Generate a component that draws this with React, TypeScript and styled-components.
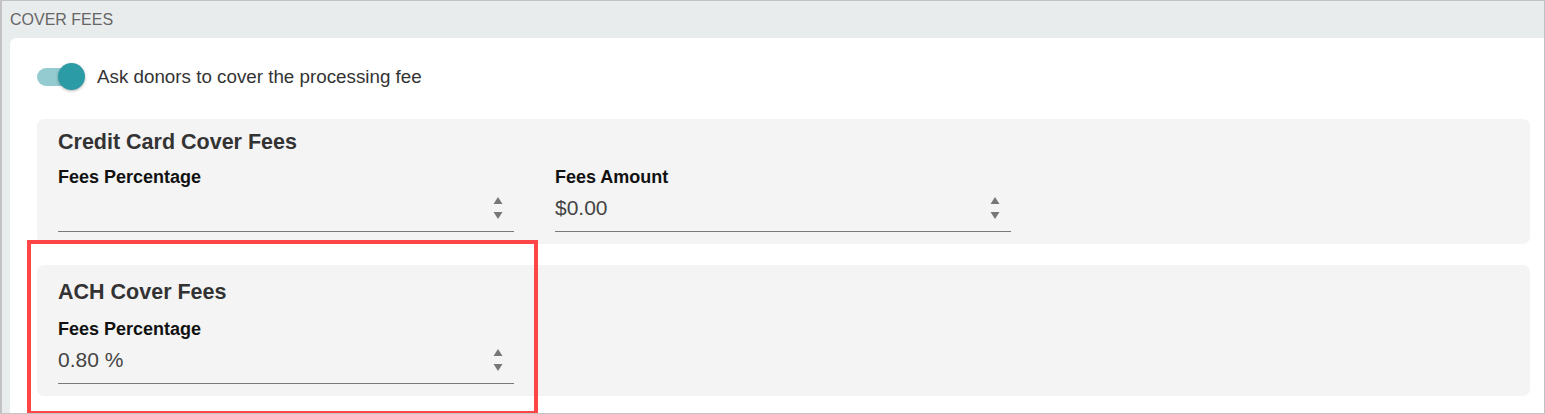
import styled, { createGlobalStyle } from 'styled-components';

const GlobalStyle = createGlobalStyle`
  html, body {
    margin: 0;
    padding: 0;
    background: #ffffff;
  }
  body {
    font-family: "Liberation Sans", Arial, sans-serif;
  }
`;

const Frame = styled.div`
  position: relative;
  box-sizing: border-box;
  width: 1545px;
  height: 414px;
  border: 1px solid #c2c2c2;
  border-left-width: 2px;
  background: #e9eced;
  display: flex;
  flex-direction: column;
  overflow: hidden;
`;

const SectionHeader = styled.div`
  flex-shrink: 0;
  height: 37px;
  display: flex;
  align-items: center;
  padding-left: 8px;
  font-size: 16px;
  color: #666;
  text-transform: uppercase;
`;

const Panel = styled.div`
  flex: 1 0 auto;
  margin-left: 8px;
  background: #ffffff;
  border-top-left-radius: 6px;
  padding: 19px 14px 0 27px;
  display: flex;
  flex-direction: column;
`;

const ToggleRow = styled.label`
  display: flex;
  align-items: center;
  gap: 12px;
  height: 40px;
  margin-bottom: 22px;
  font-size: 18.8px;
  color: #333;
`;

const Switch = styled.span<{ $on: boolean }>`
  position: relative;
  display: inline-block;
  width: 43px;
  height: 18px;
  margin-right: 5px;
  border-radius: 9px;
  background: ${({ $on }) => ($on ? '#94cbd0' : '#c8c8c8')};

  &::after {
    content: '';
    position: absolute;
    top: -5px;
    left: ${({ $on }) => ($on ? '21px' : '-2px')};
    width: 27px;
    height: 27px;
    border-radius: 50%;
    background: ${({ $on }) => ($on ? '#2b9ba6' : '#f5f5f5')};
    box-shadow: 0 1px 3px rgba(0, 0, 0, 0.3);
  }
`;

const Card = styled.section<{ $roomy?: boolean }>`
  background: #f4f4f4;
  border-radius: 7px;
  padding: ${({ $roomy }) => ($roomy ? '15px' : '11px')} 21px 12px;
  margin-bottom: 21px;
`;

const CardTitle = styled.h3<{ $roomy?: boolean }>`
  margin: 0 0 ${({ $roomy }) => ($roomy ? '15px' : '13px')};
  font-size: 21.5px;
  line-height: 24px;
  font-weight: 700;
  color: #333;
`;

const FieldGrid = styled.div`
  display: grid;
  grid-template-columns: 456px 456px;
  column-gap: 41px;
`;

const Field = styled.div`
  display: flex;
  flex-direction: column;
`;

const FieldLabel = styled.span`
  font-size: 18px;
  line-height: 20px;
  font-weight: 700;
  color: #111;
`;

const InputRow = styled.div`
  display: flex;
  align-items: center;
  justify-content: space-between;
  padding: 8px 11px 10px 0;
  border-bottom: 1px solid #7a7a7a;
`;

const InputValue = styled.span`
  font-size: 21px;
  line-height: 26px;
  height: 26px;
  color: #444;
`;

const Highlight = styled.div`
  position: absolute;
  left: 25px;
  top: 239px;
  width: 511px;
  height: 175px;
  box-sizing: border-box;
  border: 4px solid #ff4545;
  pointer-events: none;
`;

const Spinner = () => (
  <svg width="10" height="22" viewBox="0 0 10 22" aria-hidden>
    <path d="M5 0 L9.5 7 L0.5 7 Z" fill="#777" />
    <path d="M0.5 15 L9.5 15 L5 22 Z" fill="#777" />
  </svg>
);

const NumberField = ({ label, value }: { label: string; value: string }) => (
  <Field>
    <FieldLabel>{label}</FieldLabel>
    <InputRow>
      <InputValue>{value}</InputValue>
      <Spinner />
    </InputRow>
  </Field>
);

const App = () => {
  return (
    <>
      <GlobalStyle />
      <Frame>
        <SectionHeader>Cover Fees</SectionHeader>
        <Panel>
          <ToggleRow>
            <Switch $on />
            Ask donors to cover the processing fee
          </ToggleRow>

          <Card>
            <CardTitle>Credit Card Cover Fees</CardTitle>
            <FieldGrid>
              <NumberField label="Fees Percentage" value="" />
              <NumberField label="Fees Amount" value="$0.00" />
            </FieldGrid>
          </Card>

          <Card $roomy>
            <CardTitle $roomy>ACH Cover Fees</CardTitle>
            <FieldGrid>
              <NumberField label="Fees Percentage" value="0.80 %" />
            </FieldGrid>
          </Card>
        </Panel>
        <Highlight />
      </Frame>
    </>
  );
};

export default App;
